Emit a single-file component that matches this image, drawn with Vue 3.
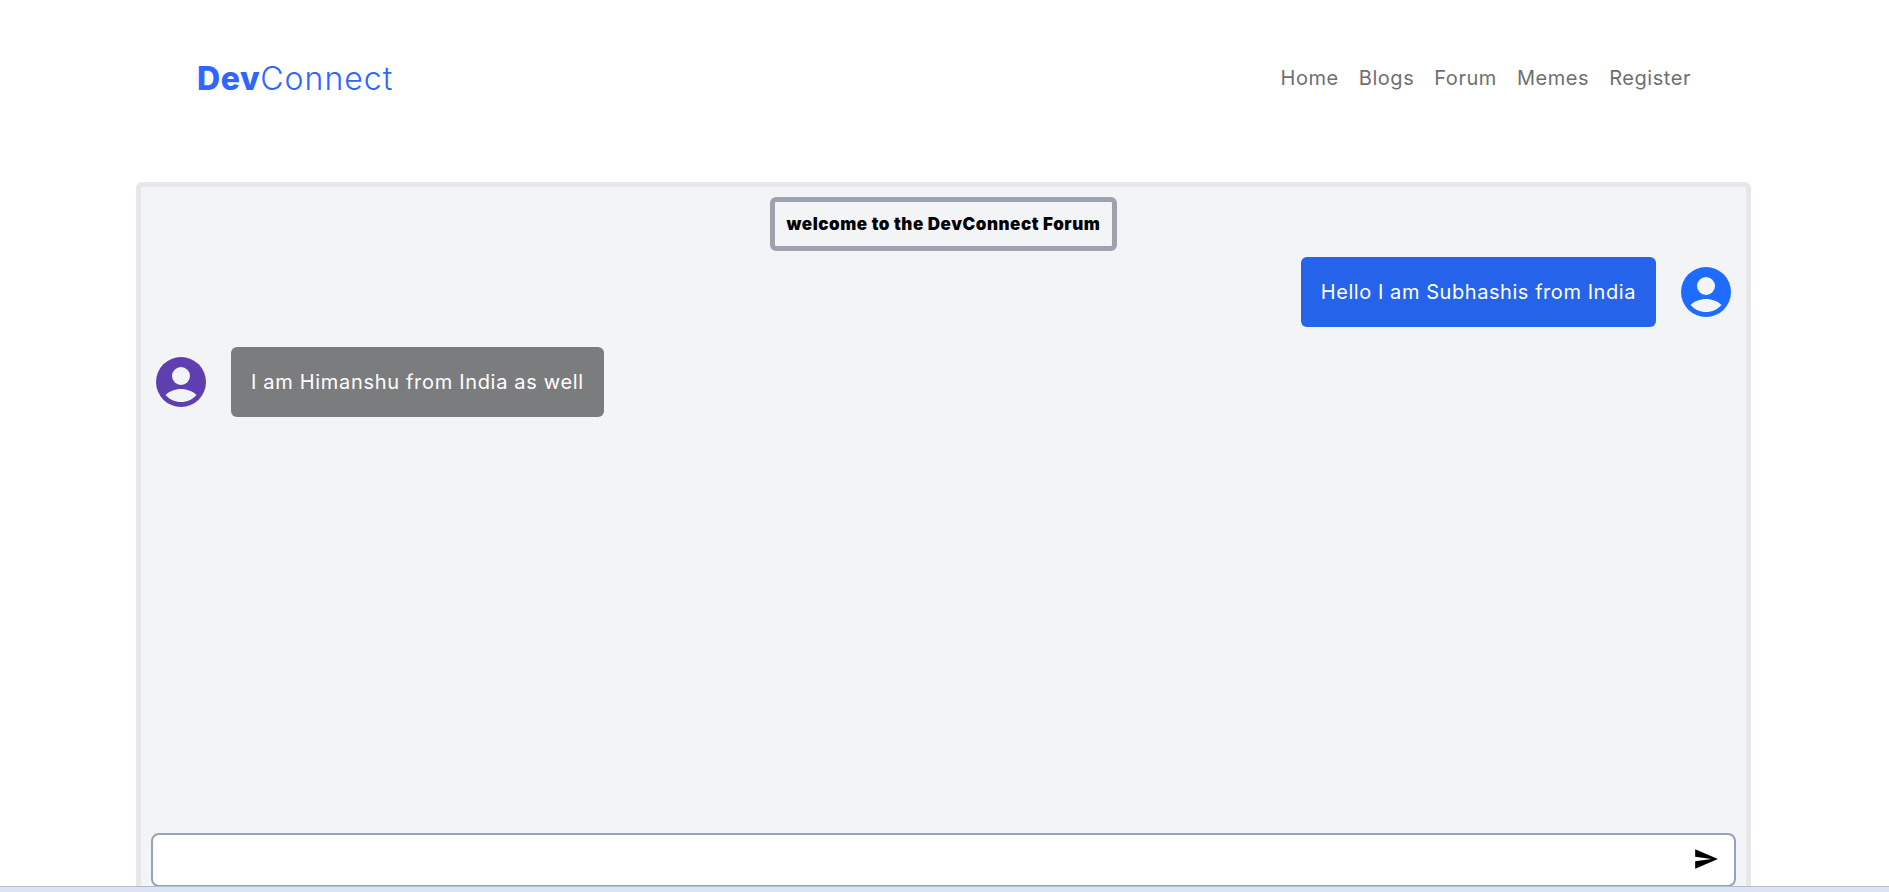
<script setup>
const links = ['Home', 'Blogs', 'Forum', 'Memes', 'Register']
</script>

<template>
  <div class="page">
    <header class="top">
      <a class="logo"><b>Dev</b>Connect</a>
      <nav class="links">
        <a v-for="l in links" :key="l">{{ l }}</a>
      </nav>
    </header>
    <main class="panel">
      <div class="title-row"><h1 class="title">welcome to the DevConnect Forum</h1></div>
      <div class="msg me">
        <div class="bubble blue">Hello I am Subhashis from India</div>
        <svg class="avatar" viewBox="0 0 50 50"><circle cx="25" cy="25" r="25" fill="#1d6cff"/><circle cx="25" cy="19" r="9" fill="#f3f4f6"/><path d="M9.5 38C13 34.5 19 32 25 32S37 34.5 40.5 38C36.5 42.5 31 45 25 45S13.5 42.5 9.5 38Z" fill="#f3f4f6"/></svg>
      </div>
      <div class="msg them">
        <svg class="avatar" viewBox="0 0 50 50"><circle cx="25" cy="25" r="25" fill="#5f3fb0"/><circle cx="25" cy="19" r="9" fill="#f3f4f6"/><path d="M9.5 38C13 34.5 19 32 25 32S37 34.5 40.5 38C36.5 42.5 31 45 25 45S13.5 42.5 9.5 38Z" fill="#f3f4f6"/></svg>
        <div class="bubble grey">I am Himanshu from India as well</div>
      </div>
      <div class="spacer"></div>
      <form class="composer" @submit.prevent>
        <input class="field" type="text" />
        <svg class="send" viewBox="0 0 24 24"><path d="M2.01 21 23 12 2.01 3 2 10l15 2-15 2z"/></svg>
      </form>
    </main>
    <div class="strip"></div>
  </div>
</template>

<style scoped>
.page {
  font-family: Inter, "Open Sans", sans-serif;
  height: 892px;
  overflow: hidden;
  background: #fff;
}
.top {
  display: flex;
  justify-content: space-between;
  align-items: center;
  height: 156px;
  padding: 0 198px 0 197px;
}
.logo {
  font-size: 32px;
  font-weight: 300;
  letter-spacing: 1px;
  color: #2f66ff;
}
.logo b { font-weight: 800; letter-spacing: 0.6px; }
.links {
  display: flex;
  gap: 20px;
  font-size: 20px;
  letter-spacing: 0.55px;
  color: #6f6f6f;
}
.panel {
  box-sizing: border-box;
  margin: 26px 0 0 136px;
  width: 1615px;
  height: 720px;
  border: 5px solid #e5e7eb;
  border-radius: 6px;
  background: #f3f4f6;
  display: flex;
  flex-direction: column;
  padding: 10px 10px 0;
}
.title-row { display: flex; justify-content: center; }
.title {
  box-sizing: border-box;
  margin: 0;
  width: 347px;
  height: 54px;
  border: 5px solid #9ca3af;
  border-radius: 6px;
  display: flex;
  align-items: center;
  justify-content: center;
  font-size: 17px;
  font-weight: 900;
  letter-spacing: 0.55px;
  color: #000;
}
.msg { display: flex; align-items: center; gap: 25px; margin-top: 6px; padding: 0 5px; }
.msg.me { justify-content: flex-end; }
.msg.them { margin-top: 20px; }
.avatar { width: 50px; height: 50px; flex: none; }
.bubble {
  box-sizing: border-box;
  height: 70px;
  display: flex;
  align-items: center;
  padding: 0 20px;
  border-radius: 6px;
  color: #fff;
  font-size: 20px;
}
.blue { background: #2563eb; letter-spacing: 0.56px; }
.grey { background: #7b7c7e; letter-spacing: 0.68px; }
.spacer { flex: 1; }
.composer { position: relative; margin: 0 0 10px; }
.field {
  box-sizing: border-box;
  display: block;
  width: 100%;
  height: 54px;
  border: 2px solid #94a3b8;
  border-radius: 8px;
  background: #fff;
  outline: none;
}
.send {
  position: absolute;
  right: 17px;
  top: 13px;
  width: 26px;
  height: 26px;
  fill: #000;
}
.strip {
  position: fixed;
  left: 0;
  right: 0;
  bottom: 0;
  height: 6px;
  box-sizing: border-box;
  background: #dbe4f5;
  border-top: 1px solid #b4bccd;
}
</style>

<style>
html, body { margin: 0; overflow: hidden; }
</style>
